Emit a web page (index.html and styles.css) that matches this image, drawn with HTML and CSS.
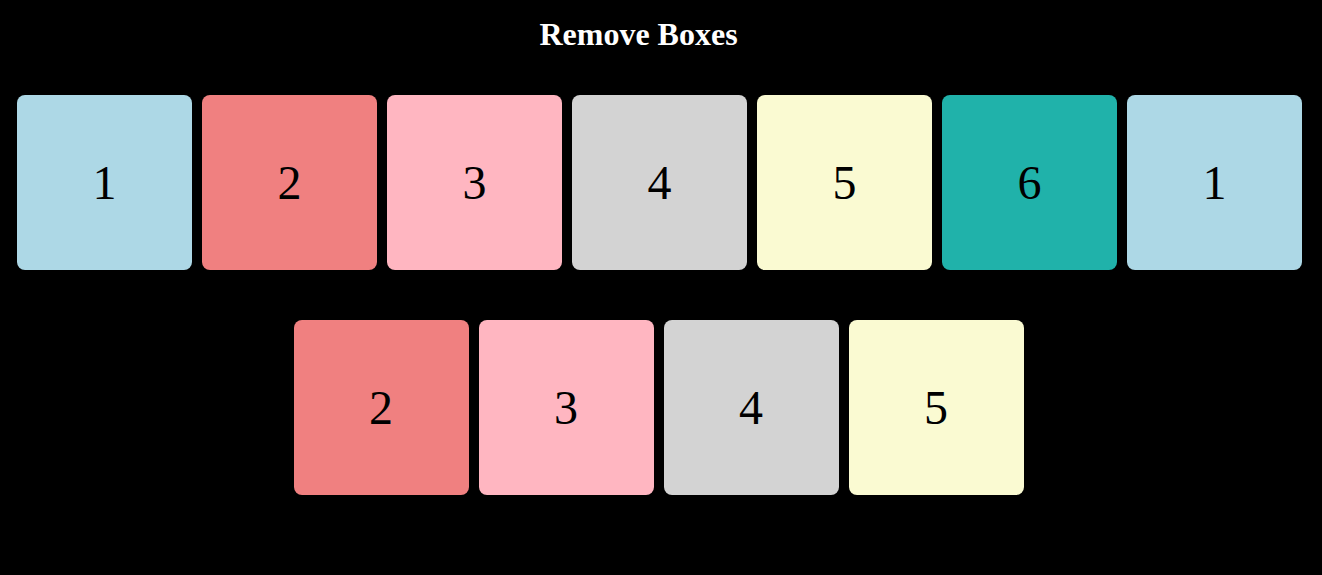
FILE: index.html
```html
<!DOCTYPE html>
<html lang="en">
<head>
  <meta charset="UTF-8" />
  <meta name="viewport" content="width=device-width, initial-scale=1.0"/>
  <title>Remove Boxes</title>
  <link rel="stylesheet" href="styles.css">
</head>
<body>

  <h1 class="title">Remove Boxes</h1>

  <!-- Boxes -->
  <div class="row">
    <div class="box c1">1</div>
    <div class="box c2">2</div>
    <div class="box c3">3</div>
    <div class="box c4">4</div>
    <div class="box c5">5</div>
    <div class="box c6">6</div>
    <div class="box c1">1</div>
  </div>

  <!-- Remaining -->
  <div class="row row-left">
    <div class="box c2">2</div>
    <div class="box c3">3</div>
    <div class="box c4">4</div>
    <div class="box c5">5</div>
  </div>

</body>
</html>
```

FILE: styles.css
```css
body {
  margin: 0;
  padding: 0 11px 0 8px;
  background: #000;
  font-family: 'Liberation Serif', 'Times New Roman', serif;
  color: #000;
}

.title {
  margin: 16px 0 42px;
  padding-right: 42px;
  font-size: 32px;
  line-height: 37px;
  font-weight: bold;
  color: #fff;
  text-align: center;
}

.row {
  display: flex;
  justify-content: center;
  gap: 10px;
  margin-bottom: 50px;
}

.row-left {
  padding-right: 2px;
}

.box {
  width: 175px;
  height: 175px;
  border-radius: 8px;
  display: flex;
  justify-content: center;
  align-items: center;
  font-size: 48px;
}

.c1 { background: lightblue; }
.c2 { background: lightcoral; }
.c3 { background: lightpink; }
.c4 { background: lightgray; }
.c5 { background: lightgoldenrodyellow; }
.c6 { background: lightseagreen; }
```
